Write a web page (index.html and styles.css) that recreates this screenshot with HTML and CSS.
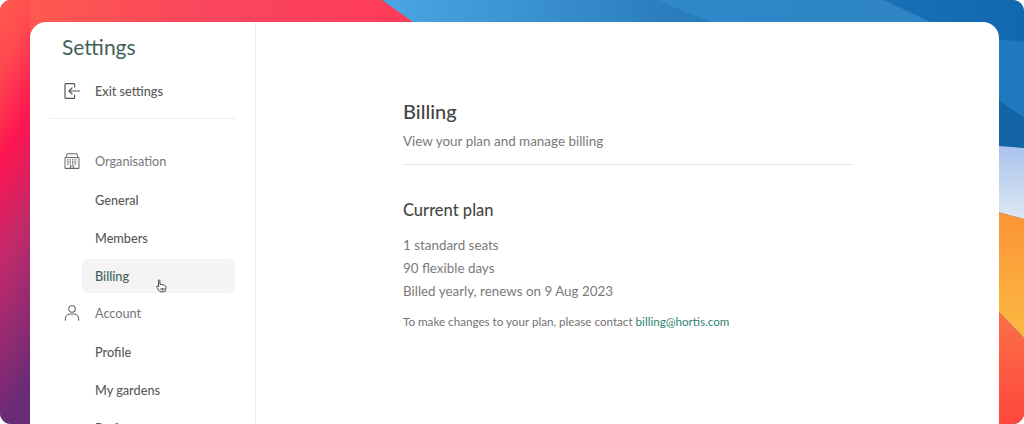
FILE: index.html
```html
<!DOCTYPE html>
<html lang="en">
<head>
  <meta charset="UTF-8" />
  <title>Billing settings</title>
  <link rel="stylesheet" href="styles.css">
</head>
<body>
  <div class="desktop">
    <svg class="wallpaper" viewBox="0 0 1024 424" preserveAspectRatio="none">
      <defs>
        <linearGradient id="warm" x1="0" y1="0" x2="0.12" y2="1">
          <stop offset="0" stop-color="#ff5b4c"/>
          <stop offset="0.16" stop-color="#ff4a50"/>
          <stop offset="0.38" stop-color="#fd1550"/>
          <stop offset="0.62" stop-color="#c12a6b"/>
          <stop offset="1" stop-color="#6a2b76"/>
        </linearGradient>
        <linearGradient id="top" x1="0" y1="0" x2="1" y2="0">
          <stop offset="0" stop-color="#ff5c4d"/>
          <stop offset="0.5" stop-color="#f9465d"/>
          <stop offset="1" stop-color="#ff3b5a"/>
        </linearGradient>
        <linearGradient id="blue" x1="0.38" y1="0" x2="1" y2="0">
          <stop offset="0" stop-color="#4aa5e2"/>
          <stop offset="0.45" stop-color="#2a7dbd"/>
          <stop offset="1" stop-color="#1068b0"/>
        </linearGradient>
        <linearGradient id="band" x1="0" y1="0" x2="1" y2="0">
          <stop offset="0" stop-color="#2d88c9"/>
          <stop offset="1" stop-color="#2f84c5"/>
        </linearGradient>
        <linearGradient id="sky" x1="0" y1="0" x2="0" y2="1">
          <stop offset="0" stop-color="#a9c3ec"/>
          <stop offset="1" stop-color="#dde8f2"/>
        </linearGradient>
        <linearGradient id="orange" x1="0" y1="0" x2="0" y2="1">
          <stop offset="0" stop-color="#fb9438"/>
          <stop offset="1" stop-color="#fcb941"/>
        </linearGradient>
        <linearGradient id="red" x1="0" y1="0" x2="0" y2="1">
          <stop offset="0" stop-color="#fb7048"/>
          <stop offset="1" stop-color="#ff473c"/>
        </linearGradient>
      </defs>
      <rect width="1024" height="424" fill="url(#blue)"/>
      <path d="M657 0L710 22H930L884 0Z" fill="url(#band)"/>
      <path d="M0 0H382L413 22V40H0Z" fill="url(#top)"/>
      <rect width="30" height="424" fill="url(#warm)"/>
      <path d="M998 39L1024 42V118L998 100Z" fill="#2079bd"/>
      <path d="M998 100L1024 118V148L998 146Z" fill="#1464a6"/>
      <path d="M998 146L1024 148V219L998 212Z" fill="url(#sky)"/>
      <path d="M998 212L1024 219V338L998 311Z" fill="url(#orange)"/>
      <path d="M998 311L1024 338V424H998Z" fill="url(#red)"/>
    </svg>

    <div class="window">
      <aside class="sidebar">
        <h1 class="sidebar-title">Settings</h1>
        <a class="nav-row nav-exit">
          <svg class="nav-icon" viewBox="0 0 16 16" fill="none" stroke="#555" stroke-width="1.2" stroke-linecap="round" stroke-linejoin="round">
            <path d="M10.6 4V1.6A.9.9 0 0 0 9.7.7H1.9a.9.9 0 0 0-.9.9v12.8c0 .5.4.9.9.9h7.8a.9.9 0 0 0 .9-.9V12"/>
            <path d="M15.5 8H5M8 5L5 8l3 3"/>
          </svg>
          <span>Exit settings</span>
        </a>
        <div class="sidebar-rule"></div>

        <div class="nav-row nav-group">
          <svg class="nav-icon" viewBox="0 0 16 16" fill="none" stroke="#666" stroke-width="1" stroke-linejoin="round">
            <path d="M1 15.4V4.600h14v10.800zM1 15.400h14M2 4.600L3 .8h10l1 3.800M6.400 15.400v-2.400h3.200v2.400"/>
            <path stroke-width="1.300" stroke-dasharray="1.300 1.100" d="M3.200 6.800h10M3.200 9h10M3.200 11.200h10"/>
          </svg>
          <span>Organisation</span>
        </div>
        <a class="nav-row nav-item">General</a>
        <a class="nav-row nav-item">Members</a>
        <a class="nav-row nav-item active">Billing</a>

        <div class="nav-row nav-group">
          <svg class="nav-icon" viewBox="0 0 16 16" fill="none" stroke="#666" stroke-width="1.100" stroke-linecap="round">
            <circle cx="8" cy="4" r="3.300"/>
            <path d="M1.400 15.200V13.400A4.600 4.600 0 0 1 6 9h4a4.600 4.600 0 0 1 4.600 4.400v1.800"/>
          </svg>
          <span>Account</span>
        </div>
        <a class="nav-row nav-item">Profile</a>
        <a class="nav-row nav-item">My gardens</a>
        <a class="nav-row nav-item">Preferences</a>

        <svg class="hand-cursor" viewBox="0 0 11 14" fill="#fff" stroke="#333" stroke-width="0.900" stroke-linejoin="round">
          <path d="M2.400 1.600c0-1 1.500-1 1.500 0v3.500l3.800.9c1.500.4 2.300 1 2.200 2.400l-.4 2.800c-.1.9-.6 1.600-1.400 1.600H4.600c-.7 0-1-.5-1.400-1L.9 8.300c-.6-.9.5-1.700 1.200-1l.6.7z"/>
          <path fill="none" stroke-width="0.800" d="M5 9v2.500M6.500 9v2.500M8 9v2.500"/>
        </svg>
      </aside>

      <main class="content">
        <div class="panel">
          <header class="panel-head">
            <h2>Billing</h2>
            <p>View your plan and manage billing</p>
          </header>
          <section class="plan">
            <h3>Current plan</h3>
            <ul class="plan-list">
              <li>1 standard seats</li>
              <li>90 flexible days</li>
              <li>Billed yearly, renews on 9 Aug 2023</li>
            </ul>
            <p class="plan-note">To make changes to your plan, please contact <a href="#">billing@hortis.com</a></p>
          </section>
        </div>
      </main>
    </div>
  </div>
</body>
</html>
```

FILE: styles.css
```css
* {
  box-sizing: border-box;
}

html, body {
  height: 100%;
  margin: 0;
  overflow: hidden;
  background-color: #fff;
  font-family: 'Lato', 'Open Sans', sans-serif;
}

.desktop {
  position: relative;
  height: 424px;
  padding: 22px 25px 0 30px;
  border-radius: 11px;
  overflow: hidden;
}

.wallpaper {
  position: absolute;
  top: 0;
  left: 0;
  width: 100%;
  height: 100%;
}

.window {
  position: relative;
  display: flex;
  height: 402px;
  background-color: #fff;
  border-radius: 16px 16px 0 0;
  overflow: hidden;
}

.sidebar {
  position: relative;
  flex: 0 0 226px;
  padding: 13px 20px 0 20px;
  border-right: 1px solid #eeeeee;
}

.sidebar-title {
  margin: 0 0 15px 12px;
  font-size: 21px;
  line-height: 24px;
  font-weight: 400;
  color: #3f625c;
}

.nav-row {
  display: flex;
  align-items: center;
  height: 34px;
  margin-bottom: 4px;
  font-size: 12.700px;
}

.nav-icon {
  flex: none;
  width: 16px;
  height: 16px;
  margin: 0 15px 0 14px;
}

.nav-exit {
  margin-bottom: 0;
  font-weight: 500;
  color: #5a5a5a;
}

.sidebar-rule {
  height: 1px;
  margin: 10px 0 25px;
  background-color: #ececec;
}

.nav-group {
  margin-bottom: 5px;
  color: #777;
}

.nav-item {
  margin-left: 32px;
  padding-left: 13px;
  font-weight: 500;
  color: #5a5a5a;
  border-radius: 6px;
}

.nav-item.active {
  margin-bottom: 3px;
  background-color: #f4f4f4;
  color: #3f625c;
}

.hand-cursor {
  position: absolute;
  top: 257px;
  left: 126px;
  width: 11px;
  height: 14px;
}

.content {
  flex: 1;
  padding: 77px 0 0 147px;
}

.panel {
  width: 449px;
}

.panel-head {
  padding-bottom: 14px;
  border-bottom: 1px solid #e6e6e6;
}

.panel-head h2 {
  margin: 0 0 9px;
  font-size: 20px;
  line-height: 24px;
  font-weight: 500;
  color: #444;
}

.panel-head p {
  margin: 0;
  font-size: 13.450px;
  line-height: 18px;
  color: #7a7a7a;
}

.plan h3 {
  margin: 34px 0 13px;
  font-size: 16.500px;
  line-height: 22px;
  font-weight: 500;
  color: #484848;
}

.plan-list {
  margin: 0;
  padding: 0;
  list-style: none;
  font-size: 13.400px;
  line-height: 23px;
  color: #7a7a7a;
}

.plan-note {
  margin: 11px 0 0;
  font-size: 11.650px;
  line-height: 16px;
  color: #737373;
}

.plan-note a {
  color: #2f7f73;
  text-decoration: none;
}
```
